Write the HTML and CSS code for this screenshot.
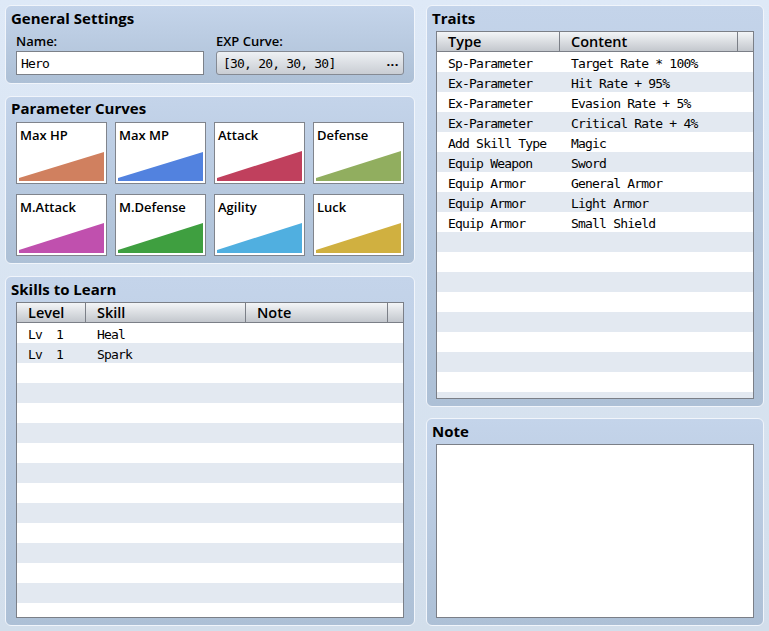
FILE: index.html
```html
<!DOCTYPE html>
<html lang="en">
<head>
<meta charset="utf-8">
<title>Actor Editor</title>
<link rel="stylesheet" href="styles.css">
</head>
<body>
<div class="app">
  <div class="col col-left">
    <section class="panel panel-general">
      <h2 class="title">General Settings</h2>
      <div class="fields">
        <div class="field">
          <div class="label">Name:</div>
          <div class="input mono">Hero</div>
        </div>
        <div class="field">
          <div class="label">EXP Curve:</div>
          <div class="picker">
            <span class="mono">[30, 20, 30, 30]</span>
            <span class="dots">...</span>
          </div>
        </div>
      </div>
    </section>

    <section class="panel panel-params">
      <h2 class="title">Parameter Curves</h2>
      <div class="curves">
        <div class="curve"><div class="curve-label">Max HP</div><svg class="curve-graph" viewBox="0 0 85 30" width="85" height="30"><polygon class="fill-mhp" points="0,27 85,1 85,30 0,30"/></svg></div>
        <div class="curve"><div class="curve-label">Max MP</div><svg class="curve-graph" viewBox="0 0 85 30" width="85" height="30"><polygon class="fill-mmp" points="0,27 85,1 85,30 0,30"/></svg></div>
        <div class="curve"><div class="curve-label">Attack</div><svg class="curve-graph" viewBox="0 0 85 30" width="85" height="30"><polygon class="fill-atk" points="0,27 85,0 85,30 0,30"/></svg></div>
        <div class="curve"><div class="curve-label">Defense</div><svg class="curve-graph" viewBox="0 0 85 30" width="85" height="30"><polygon class="fill-def" points="0,27 85,0 85,30 0,30"/></svg></div>
        <div class="curve"><div class="curve-label">M.Attack</div><svg class="curve-graph" viewBox="0 0 85 30" width="85" height="30"><polygon class="fill-mat" points="0,27 85,0 85,30 0,30"/></svg></div>
        <div class="curve"><div class="curve-label">M.Defense</div><svg class="curve-graph" viewBox="0 0 85 30" width="85" height="30"><polygon class="fill-mdf" points="0,27 85,0 85,30 0,30"/></svg></div>
        <div class="curve"><div class="curve-label">Agility</div><svg class="curve-graph" viewBox="0 0 85 30" width="85" height="30"><polygon class="fill-agi" points="0,27 85,0 85,30 0,30"/></svg></div>
        <div class="curve"><div class="curve-label">Luck</div><svg class="curve-graph" viewBox="0 0 85 30" width="85" height="30"><polygon class="fill-luk" points="0,27 85,0 85,30 0,30"/></svg></div>
      </div>
    </section>

    <section class="panel panel-skills">
      <h2 class="title">Skills to Learn</h2>
      <div class="table table-skills">
        <div class="thead">
          <div class="th">Level</div>
          <div class="th">Skill</div>
          <div class="th">Note</div>
          <div class="th th-end"></div>
        </div>
        <div class="tbody">
          <div class="tr"><span class="td">Lv  1</span><span class="td">Heal</span><span class="td"></span></div>
          <div class="tr"><span class="td">Lv  1</span><span class="td">Spark</span><span class="td"></span></div>
        </div>
      </div>
    </section>
  </div>

  <div class="col col-right">
    <section class="panel panel-traits">
      <h2 class="title">Traits</h2>
      <div class="table table-traits">
        <div class="thead">
          <div class="th">Type</div>
          <div class="th">Content</div>
          <div class="th th-end"></div>
        </div>
        <div class="tbody">
          <div class="tr"><span class="td">Sp-Parameter</span><span class="td">Target Rate * 100%</span></div>
          <div class="tr"><span class="td">Ex-Parameter</span><span class="td">Hit Rate + 95%</span></div>
          <div class="tr"><span class="td">Ex-Parameter</span><span class="td">Evasion Rate + 5%</span></div>
          <div class="tr"><span class="td">Ex-Parameter</span><span class="td">Critical Rate + 4%</span></div>
          <div class="tr"><span class="td">Add Skill Type</span><span class="td">Magic</span></div>
          <div class="tr"><span class="td">Equip Weapon</span><span class="td">Sword</span></div>
          <div class="tr"><span class="td">Equip Armor</span><span class="td">General Armor</span></div>
          <div class="tr"><span class="td">Equip Armor</span><span class="td">Light Armor</span></div>
          <div class="tr"><span class="td">Equip Armor</span><span class="td">Small Shield</span></div>
        </div>
      </div>
    </section>

    <section class="panel panel-note">
      <h2 class="title">Note</h2>
      <div class="note-box"></div>
    </section>
  </div>
</div>
</body>
</html>
```
FILE: styles.css
```css
* { box-sizing: border-box; }

html, body {
  margin: 0;
  padding: 0;
}

body {
  width: 769px;
  height: 631px;
  overflow: hidden;
  font-family: "Open Sans", "Noto Sans", sans-serif;
  font-size: 13px;
  color: #000;
  background: linear-gradient(#dee9f7, #d2deeb);
}

.mono {
  font-family: "DejaVu Sans Mono", "Liberation Mono", monospace;
  font-size: 13px;
  letter-spacing: -0.8px;
}

.app {
  display: grid;
  grid-template-columns: 410px 338px;
  column-gap: 11px;
  padding: 5px;
  height: 631px;
}

.col {
  display: flex;
  flex-direction: column;
  min-height: 0;
}

.col-left { gap: 12px; }
.col-right { gap: 11px; }

.panel {
  border: 1px solid #f1f5fb;
  border-radius: 6px;
  background: linear-gradient(#c4d4ea, #adc0d6);
  padding: 3px 10px 7px 10px;
  display: flex;
  flex-direction: column;
  min-height: 0;
}

.col-right .panel {
  padding-left: 9px;
  padding-right: 9px;
}

.title {
  margin: 0 0 4px -5px;
  font-size: 15px;
  line-height: 18px;
  font-weight: 700;
  color: #000;
}

.col-right .title { margin-left: -4px; }

/* General settings */
.panel-general { height: 79px; }

.fields {
  display: grid;
  grid-template-columns: 188px 188px;
  column-gap: 12px;
  padding-top: 2px;
}

.label {
  line-height: 16px;
  margin-bottom: 2px;
  font-weight: 600;
}

.input {
  height: 24px;
  background: #fff;
  border: 1px solid #7c8189;
  padding: 1px 0 0 4px;
  line-height: 22px;
}

.picker {
  height: 24px;
  border: 1px solid #858a93;
  border-radius: 3px;
  background: linear-gradient(#eef1f4, #c9cdd3);
  display: flex;
  justify-content: space-between;
  align-items: center;
  padding: 1px 4px 0 6px;
  line-height: 22px;
}

.dots {
  font-weight: 700;
  font-size: 13px;
  letter-spacing: 0.5px;
  line-height: 12px;
  margin-top: -5px;
}

/* Parameter curves */
.panel-params { height: 168px; }
.panel-params .title { margin-top: -1px; margin-bottom: 5px; }

.curves {
  display: grid;
  grid-template-columns: repeat(4, 91px);
  grid-auto-rows: 62px;
  column-gap: 8px;
  row-gap: 10px;
}

.curve {
  border: 1px solid #80848c;
  background: #fff;
  padding: 4px 2px 2px 2px;
  display: flex;
  flex-direction: column;
}

.curve-label {
  line-height: 16px;
  padding-left: 1px;
  font-weight: 600;
}

.curve-graph {
  display: block;
  margin-top: auto;
}

.fill-mhp { fill: #d0805f; }
.fill-mmp { fill: #5282df; }
.fill-atk { fill: #c0405d; }
.fill-def { fill: #91ae5f; }
.fill-mat { fill: #c050ae; }
.fill-mdf { fill: #3f9f40; }
.fill-agi { fill: #50afe0; }
.fill-luk { fill: #d0b040; }

/* Tables */
.panel-skills { flex: 1; }
.panel-traits { height: 402px; }
.panel-note { flex: 1; }

.table {
  flex: 1;
  min-height: 0;
  border: 1px solid #7b7f87;
  display: flex;
  flex-direction: column;
  background: #fff;
}

.thead {
  display: grid;
  height: 20px;
  border-bottom: 1px solid #7b7f87;
  background: linear-gradient(#f3f5f7, #c3c7cd);
}

.th {
  border-right: 1px solid #7b7f87;
  padding: 1px 0 0 11px;
  font-size: 14.5px;
  line-height: 18px;
  font-weight: 600;
}

.th-end { border-right: none; }

.tbody {
  flex: 1;
  background: repeating-linear-gradient(#ffffff 0 20px, #e3e9f1 20px 40px);
}

.tr {
  display: grid;
  height: 20px;
}

.td {
  font-family: "DejaVu Sans Mono", "Liberation Mono", monospace;
  font-size: 13px;
  letter-spacing: -0.8px;
  padding: 3px 0 0 11px;
  line-height: 17px;
  white-space: pre;
}

.table-skills .thead,
.table-skills .tr {
  grid-template-columns: 69px 160px 142px 1fr;
}

.table-traits .thead,
.table-traits .tr {
  grid-template-columns: 123px 178px 1fr;
}

.note-box {
  flex: 1;
  background: #fff;
  border: 1px solid #7b7f87;
}
```
